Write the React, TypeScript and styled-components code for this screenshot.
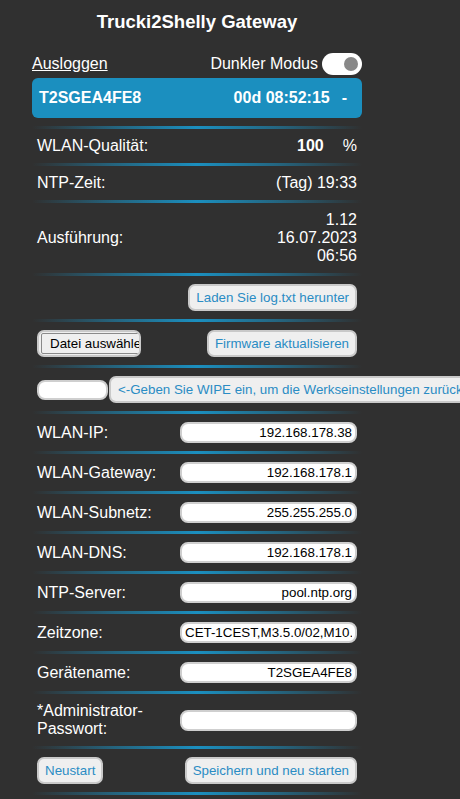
import styled, { createGlobalStyle } from 'styled-components';

const GlobalStyle = createGlobalStyle`
	html, body {
		margin: 0;
		padding: 0;
		background: #303030;
		overflow-x: hidden;
	}
	body {
		font-family: "Liberation Sans", Arial, sans-serif;
		color: #fff;
	}
`;

const ACCENT = '#1b8fbf';

const Page = styled.main`
	width: 330px;
	margin-left: 32px;
	display: flex;
	flex-direction: column;
`;

const Title = styled.h1`
	margin: 0;
	height: 44px;
	line-height: 44px;
	font-size: 18.5px;
	font-weight: 700;
	text-align: center;
`;

const TopBar = styled.div`
	display: flex;
	align-items: center;
	justify-content: space-between;
	height: 23px;
	margin-top: 8px;
	font-size: 16px;
`;

const LogoutLink = styled.a`
	color: #fff;
	text-decoration: underline;
	cursor: pointer;
`;

const DarkMode = styled.label`
	display: flex;
	align-items: center;
	gap: 4px;
`;

const Switch = styled.span`
	position: relative;
	display: block;
	width: 40px;
	height: 22px;
	border-radius: 11px;
	background: #fff;
`;

const Knob = styled.span`
	position: absolute;
	top: 4px;
	right: 4px;
	width: 14px;
	height: 14px;
	border-radius: 50%;
	background: #888;
`;

const StatusBar = styled.div`
	display: flex;
	align-items: center;
	justify-content: space-between;
	height: 40px;
	margin-top: 3px;
	padding: 0 15px 0 7px;
	border-radius: 6px;
	background: ${ACCENT};
	font-size: 16px;
	font-weight: 700;
`;

const Dash = styled.span`
	margin-left: 12px;
`;

const Divider = styled.div<{ $first?: boolean }>`
	height: 3px;
	margin-top: ${(p) => (p.$first ? '8px' : '0')};
	background: linear-gradient(
		to right,
		rgba(27, 143, 191, 0) 0%,
		rgba(27, 143, 191, 0.55) 25%,
		${ACCENT} 50%,
		rgba(27, 143, 191, 0.55) 75%,
		rgba(27, 143, 191, 0) 100%
	);
`;

const Row = styled.div<{ $align?: string }>`
	display: flex;
	align-items: center;
	justify-content: ${(p) => p.$align || 'space-between'};
	padding: 8px 5px;
	font-size: 16px;
	line-height: 18px;
`;

const Label = styled.span`
	width: 143px;
	flex-shrink: 0;
`;

const Value = styled.span`
	text-align: right;
`;

const Unit = styled.span`
	margin-left: 19px;
`;

const Field = styled.input`
	box-sizing: border-box;
	width: 177px;
	height: 21px;
	padding: 0 3px;
	border: 2px solid #cfcfcf;
	border-radius: 8px;
	background: #fff;
	color: #000;
	font-family: "Liberation Sans", Arial, sans-serif;
	font-size: 13.33px;
	text-align: right;
	outline: none;
`;

const WipeField = styled(Field)`
	width: 71px;
	height: 20px;
`;

const Button = styled.button`
	box-sizing: border-box;
	height: 27px;
	padding: 0 6px;
	border: 2px solid #c9c9c9;
	border-radius: 7px;
	background: #efefef;
	color: #2a8cc4;
	font-family: "Liberation Sans", Arial, sans-serif;
	font-size: 13.33px;
	white-space: nowrap;
	cursor: pointer;
`;

const WipeButton = styled(Button)`
	flex-shrink: 0;
	margin-left: 1px;
	padding: 0 7px;
`;

const WipeRow = styled(Row)`
	justify-content: flex-start;
`;

const FilePicker = styled.label`
	box-sizing: border-box;
	display: flex;
	align-items: center;
	width: 104px;
	height: 27px;
	padding-left: 2px;
	border: 2px solid #c9c9c9;
	border-radius: 7px;
	background: #efefef;
	overflow: hidden;
`;

const FileButton = styled.span`
	flex-shrink: 0;
	height: 19px;
	padding: 0 6px 0 8px;
	border: 1px solid #8a8a8a;
	border-radius: 2px;
	background: #efefef;
	color: #000;
	font-size: 13.33px;
	line-height: 19px;
	white-space: nowrap;
`;

const fields = [
	{ label: 'WLAN-IP:', value: '192.168.178.38' },
	{ label: 'WLAN-Gateway:', value: '192.168.178.1' },
	{ label: 'WLAN-Subnetz:', value: '255.255.255.0' },
	{ label: 'WLAN-DNS:', value: '192.168.178.1' },
	{ label: 'NTP-Server:', value: 'pool.ntp.org' },
	{ label: 'Zeitzone:', value: 'CET-1CEST,M3.5.0/02,M10.5.0/03' },
	{ label: 'Gerätename:', value: 'T2SGEA4FE8' },
	{ label: '*Administrator-Passwort:', value: '' },
];

export default function App() {
	return (
		<>
			<GlobalStyle />
			<Page>
				<Title>Trucki2Shelly Gateway</Title>
				<TopBar>
					<LogoutLink>Ausloggen</LogoutLink>
					<DarkMode>
						Dunkler Modus
						<Switch>
							<Knob />
						</Switch>
					</DarkMode>
				</TopBar>
				<StatusBar>
					<span>T2SGEA4FE8</span>
					<span>
						00d 08:52:15<Dash>-</Dash>
					</span>
				</StatusBar>

				<Divider $first />
				<Row>
					<Label>WLAN-Qualität:</Label>
					<Value>
						<b>100</b>
						<Unit>%</Unit>
					</Value>
				</Row>
				<Divider />
				<Row>
					<Label>NTP-Zeit:</Label>
					<Value>(Tag) 19:33</Value>
				</Row>
				<Divider />
				<Row>
					<Label>Ausführung:</Label>
					<Value>
						1.12
						<br />
						16.07.2023
						<br />
						06:56
					</Value>
				</Row>
				<Divider />
				<Row $align="flex-end">
					<Button type="button">Laden Sie log.txt herunter</Button>
				</Row>
				<Divider />
				<Row>
					<FilePicker>
						<FileButton>Datei auswählen</FileButton>
					</FilePicker>
					<Button type="button">Firmware aktualisieren</Button>
				</Row>
				<Divider />
				<WipeRow>
					<WipeField type="text" />
					<WipeButton type="button">
						&lt;-Geben Sie WIPE ein, um die Werkseinstellungen zurückzusetzen
					</WipeButton>
				</WipeRow>
				<Divider />
				{fields.map((f) => (
					<div key={f.label}>
						<Row>
							<Label>{f.label}</Label>
							<Field
								type={f.value ? 'text' : 'password'}
								defaultValue={f.value}
							/>
						</Row>
						<Divider />
					</div>
				))}
				<Row>
					<Button type="button">Neustart</Button>
					<Button type="button">Speichern und neu starten</Button>
				</Row>
				<Divider />
			</Page>
		</>
	);
}
